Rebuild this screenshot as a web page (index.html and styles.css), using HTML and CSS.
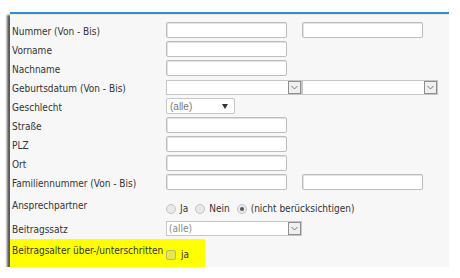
FILE: index.html
```html
<!DOCTYPE html>
<html lang="de">
<head>
    <meta charset="UTF-8">
    <title>Suche</title>
    <link rel="stylesheet" href="styles.css">
</head>
<body>
    <div class="panel">
        <div class="row">
            <label class="label">Nummer (Von - Bis)</label>
            <input class="field" type="text">
            <input class="field field-second" type="text">
        </div>
        <div class="row">
            <label class="label">Vorname</label>
            <input class="field" type="text">
        </div>
        <div class="row">
            <label class="label">Nachname</label>
            <input class="field" type="text">
        </div>
        <div class="row">
            <label class="label">Geburtsdatum (Von - Bis)</label>
            <div class="combo combo-wide"><span class="combo-btn"><svg width="7" height="5" viewBox="0 0 7 5"><path d="M0.5 1 L3.5 4 L6.5 1" fill="none" stroke="#777" stroke-width="1"/></svg></span></div>
            <div class="combo combo-wide"><span class="combo-btn"><svg width="7" height="5" viewBox="0 0 7 5"><path d="M0.5 1 L3.5 4 L6.5 1" fill="none" stroke="#777" stroke-width="1"/></svg></span></div>
        </div>
        <div class="row">
            <label class="label">Geschlecht</label>
            <div class="dropdown"><span class="value">(alle)</span><svg class="tri" width="6" height="5" viewBox="0 0 6 5"><path d="M0 0 L6 0 L3 5 Z" fill="#333"/></svg></div>
        </div>
        <div class="row">
            <label class="label">Straße</label>
            <input class="field" type="text">
        </div>
        <div class="row">
            <label class="label">PLZ</label>
            <input class="field" type="text">
        </div>
        <div class="row">
            <label class="label">Ort</label>
            <input class="field" type="text">
        </div>
        <div class="row">
            <label class="label">Familiennummer (Von - Bis)</label>
            <input class="field" type="text">
            <input class="field field-second" type="text">
        </div>
        <div class="row row-radios">
            <label class="label">Ansprechpartner</label>
            <div class="options">
                <span class="radio"></span><span class="opt">Ja</span>
                <span class="radio"></span><span class="opt">Nein</span>
                <span class="radio checked"></span><span class="opt">(nicht berücksichtigen)</span>
            </div>
        </div>
        <div class="row">
            <label class="label">Beitragssatz</label>
            <div class="combo combo-wide"><span class="value">(alle)</span><span class="combo-btn"><svg width="7" height="5" viewBox="0 0 7 5"><path d="M0.5 1 L3.5 4 L6.5 1" fill="none" stroke="#777" stroke-width="1"/></svg></span></div>
        </div>
        <div class="row row-mark">
            <label class="label">Beitragsalter über-/unterschritten</label>
            <div class="check-wrap">
                <span class="checkbox"></span><span class="opt">ja</span>
            </div>
        </div>
    </div>
</body>
</html>
```

FILE: styles.css
```css
body {
    margin: 0;
    background-color: #fff;
    font-family: 'DejaVu Sans Condensed', 'DejaVu Sans', sans-serif;
    font-size: 10px;
    color: #333;
}

.panel {
    margin: 12px 0 0 10px;
    width: 437px;
    padding: 8px 0 0 2px;
    background-color: #f7f7f7;
    border-top: 2px solid #2d8fd5;
    box-shadow: inset 0 1px 0 #efe5d3, -3px 3px 2px rgba(0, 0, 0, 0.65);
}

.row {
    display: flex;
    align-items: center;
    height: 16px;
    margin-bottom: 3px;
}

.label {
    width: 154px;
    flex-shrink: 0;
    align-self: flex-start;
    padding-top: 2px;
    line-height: 16px;
    white-space: nowrap;
}

.field {
    width: 121px;
    height: 16px;
    margin: 0;
    padding: 0 3px;
    border: 1px solid #bdbdbd;
    border-radius: 2px;
    box-shadow: inset 1px 1px 0 #e2e2e2;
    background-color: #fff;
    box-sizing: border-box;
}

.field-second {
    margin-left: 15px;
}

.combo {
    display: flex;
    align-items: center;
    height: 15px;
    background-color: #fff;
    border: 1px solid #c6c6c6;
    box-sizing: border-box;
}

.combo-wide {
    width: 136px;
}

.combo .value {
    flex: 1;
    padding-left: 2px;
    color: #888;
    line-height: 13px;
}

.combo-btn {
    margin-left: auto;
    width: 13px;
    height: 13px;
    display: flex;
    align-items: center;
    justify-content: center;
    background-color: #f0f0f0;
    border: 1px solid #8e8e8e;
    box-sizing: border-box;
}

.dropdown {
    display: flex;
    align-items: center;
    width: 69px;
    height: 16px;
    padding: 0 6px 0 3px;
    background-color: #fff;
    border: 1px solid #c6c6c6;
    border-radius: 2px;
    box-sizing: border-box;
}

.dropdown .value {
    flex: 1;
    color: #777;
    font-family: 'Liberation Sans', sans-serif;
    font-size: 10px;
}

.row-radios {
    height: 24px;
    align-items: flex-start;
}

.row-radios .label {
    padding-top: 5px;
}

.options {
    display: flex;
    align-items: center;
    padding-top: 8px;
    line-height: 16px;
}

.radio {
    width: 10px;
    height: 10px;
    border-radius: 50%;
    border: 1px solid #c4c4c4;
    background-color: #e9e9e9;
    box-sizing: border-box;
    margin-right: 4px;
    position: relative;
}

.radio.checked::after {
    content: "";
    position: absolute;
    left: 2px;
    top: 2px;
    width: 4px;
    height: 4px;
    border-radius: 50%;
    background-color: #555;
}

.opt {
    margin-right: 7px;
}

.row-mark {
    height: 28px;
    width: 193px;
    margin: 0 0 0 -2px;
    padding-left: 2px;
    align-items: flex-start;
    background-color: #ffff00;
}

.row-mark .label {
    padding-top: 4px;
}

.check-wrap {
    display: flex;
    align-items: center;
    padding-top: 8px;
    line-height: 16px;
}

.checkbox {
    width: 10px;
    height: 10px;
    margin-right: 5px;
    border: 1px solid #b9b96a;
    border-radius: 2px;
    background-color: #e6e650;
    box-sizing: border-box;
}
```
